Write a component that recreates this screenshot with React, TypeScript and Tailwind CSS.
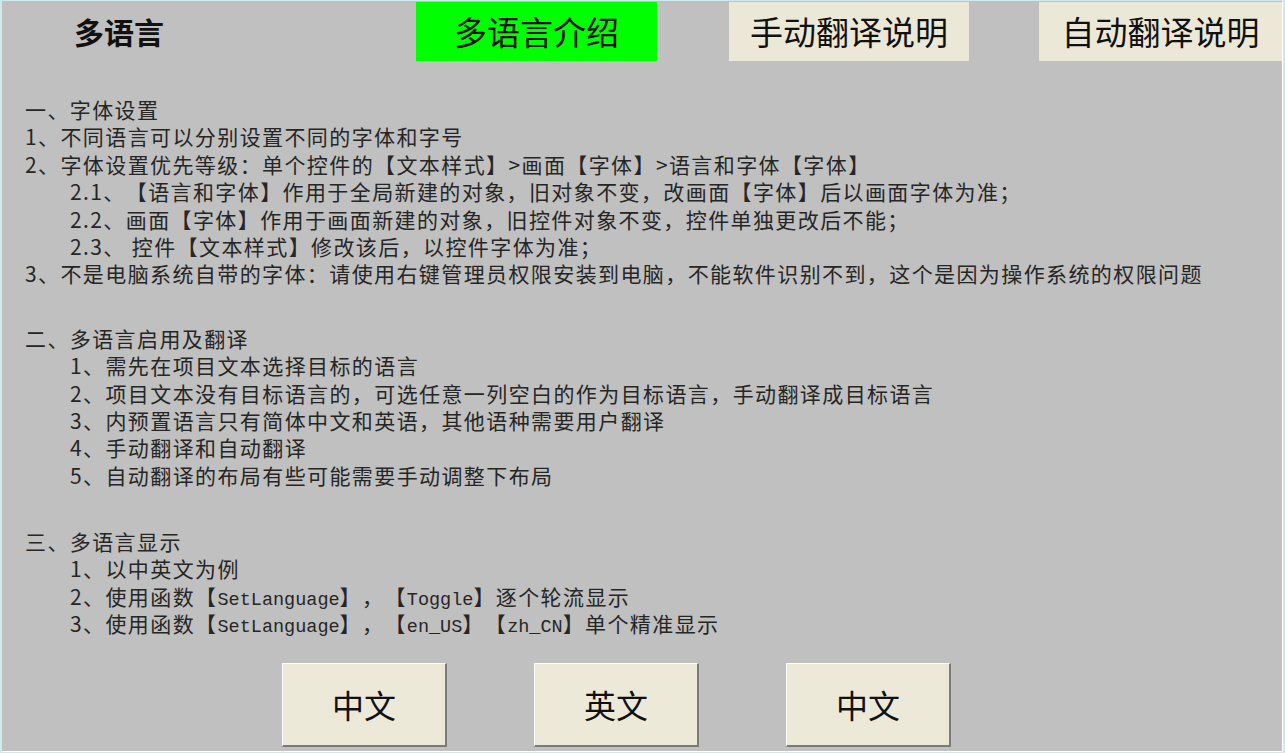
const cjk = { fontFamily: '"Noto Sans CJK SC", "Noto Sans", sans-serif' };

function M({ children }: { children: React.ReactNode }) {
  return <span className="font-['Liberation_Mono',monospace] text-[18.5px] tracking-normal">{children}</span>;
}

function Line({ indent, children }: { indent?: boolean; children: React.ReactNode }) {
  return <div className={`h-[27.4px] leading-[27.4px] whitespace-nowrap ${indent ? "pl-[45px]" : ""}`}>{children}</div>;
}

function TopButton({ label, active, width }: { label: string; active?: boolean; width: string }) {
  return (
    <div
      className={`flex h-[59px] items-center justify-center text-[33px] text-[#111] ${width} ${
        active ? "bg-[#00ff00]" : "bg-[#ece8d8]"
      }`}
    >
      {label}
    </div>
  );
}

function LangButton({ label }: { label: string }) {
  return (
    <button
      type="button"
      className="flex h-[84px] w-[165px] items-center justify-center border-t border-l border-t-white border-l-white border-r-2 border-b-2 border-r-[#7a7a7a] border-b-[#7a7a7a] bg-[#ece9d8] text-[32px] text-[#111]"
    >
      {label}
    </button>
  );
}

export default function App() {
  return (
    <div className="h-[753px] w-[1285px] bg-[#cfe9ef] pt-px pl-[2px] pr-[2px] pb-[1px] [text-spacing-trim:space-all]" style={cjk}>
      <div className="flex h-full w-full flex-col border-r border-b border-white bg-[#c0c0c0]">
        <div className="flex h-[61px] items-start pt-px">
          <div className="ml-[72px] mt-[14px] w-[342px] text-[30px] font-bold leading-[30px] text-[#111]">多语言</div>
          <TopButton label="多语言介绍" active width="w-[241px]" />
          <div className="w-[72px]" />
          <TopButton label="手动翻译说明" width="w-[240px]" />
          <div className="w-[70px]" />
          <TopButton label="自动翻译说明" width="flex-1" />
        </div>

        <div className="mt-[34px] pl-[23px] text-[21px] tracking-[1.4px] text-[#262626]">
          <Line>一、字体设置</Line>
          <Line>1、不同语言可以分别设置不同的字体和字号</Line>
          <Line>2、字体设置优先等级：单个控件的【文本样式】&gt;画面【字体】&gt;语言和字体【字体】</Line>
          <Line indent>2.1、【语言和字体】作用于全局新建的对象，旧对象不变，改画面【字体】后以画面字体为准；</Line>
          <Line indent>2.2、画面【字体】作用于画面新建的对象，旧控件对象不变，控件单独更改后不能；</Line>
          <Line indent>2.3、 控件【文本样式】修改该后，以控件字体为准；</Line>
          <Line>3、不是电脑系统自带的字体：请使用右键管理员权限安装到电脑，不能软件识别不到，这个是因为操作系统的权限问题</Line>

          <div className="mt-[37px]">
            <Line>二、多语言启用及翻译</Line>
            <Line indent>1、需先在项目文本选择目标的语言</Line>
            <Line indent>2、项目文本没有目标语言的，可选任意一列空白的作为目标语言，手动翻译成目标语言</Line>
            <Line indent>3、内预置语言只有简体中文和英语，其他语种需要用户翻译</Line>
            <Line indent>4、手动翻译和自动翻译</Line>
            <Line indent>5、自动翻译的布局有些可能需要手动调整下布局</Line>
          </div>

          <div className="mt-[39px]">
            <Line>三、多语言显示</Line>
            <Line indent>1、以中英文为例</Line>
            <Line indent>
              2、使用函数【<M>SetLanguage</M>】，【<M>Toggle</M>】逐个轮流显示
            </Line>
            <Line indent>
              3、使用函数【<M>SetLanguage</M>】，【<M>en_US</M>】【<M>zh_CN</M>】单个精准显示
            </Line>
          </div>
        </div>

        <div className="mt-[25px] flex gap-[87px] pl-[280px]">
          <LangButton label="中文" />
          <LangButton label="英文" />
          <LangButton label="中文" />
        </div>
      </div>
    </div>
  );
}
